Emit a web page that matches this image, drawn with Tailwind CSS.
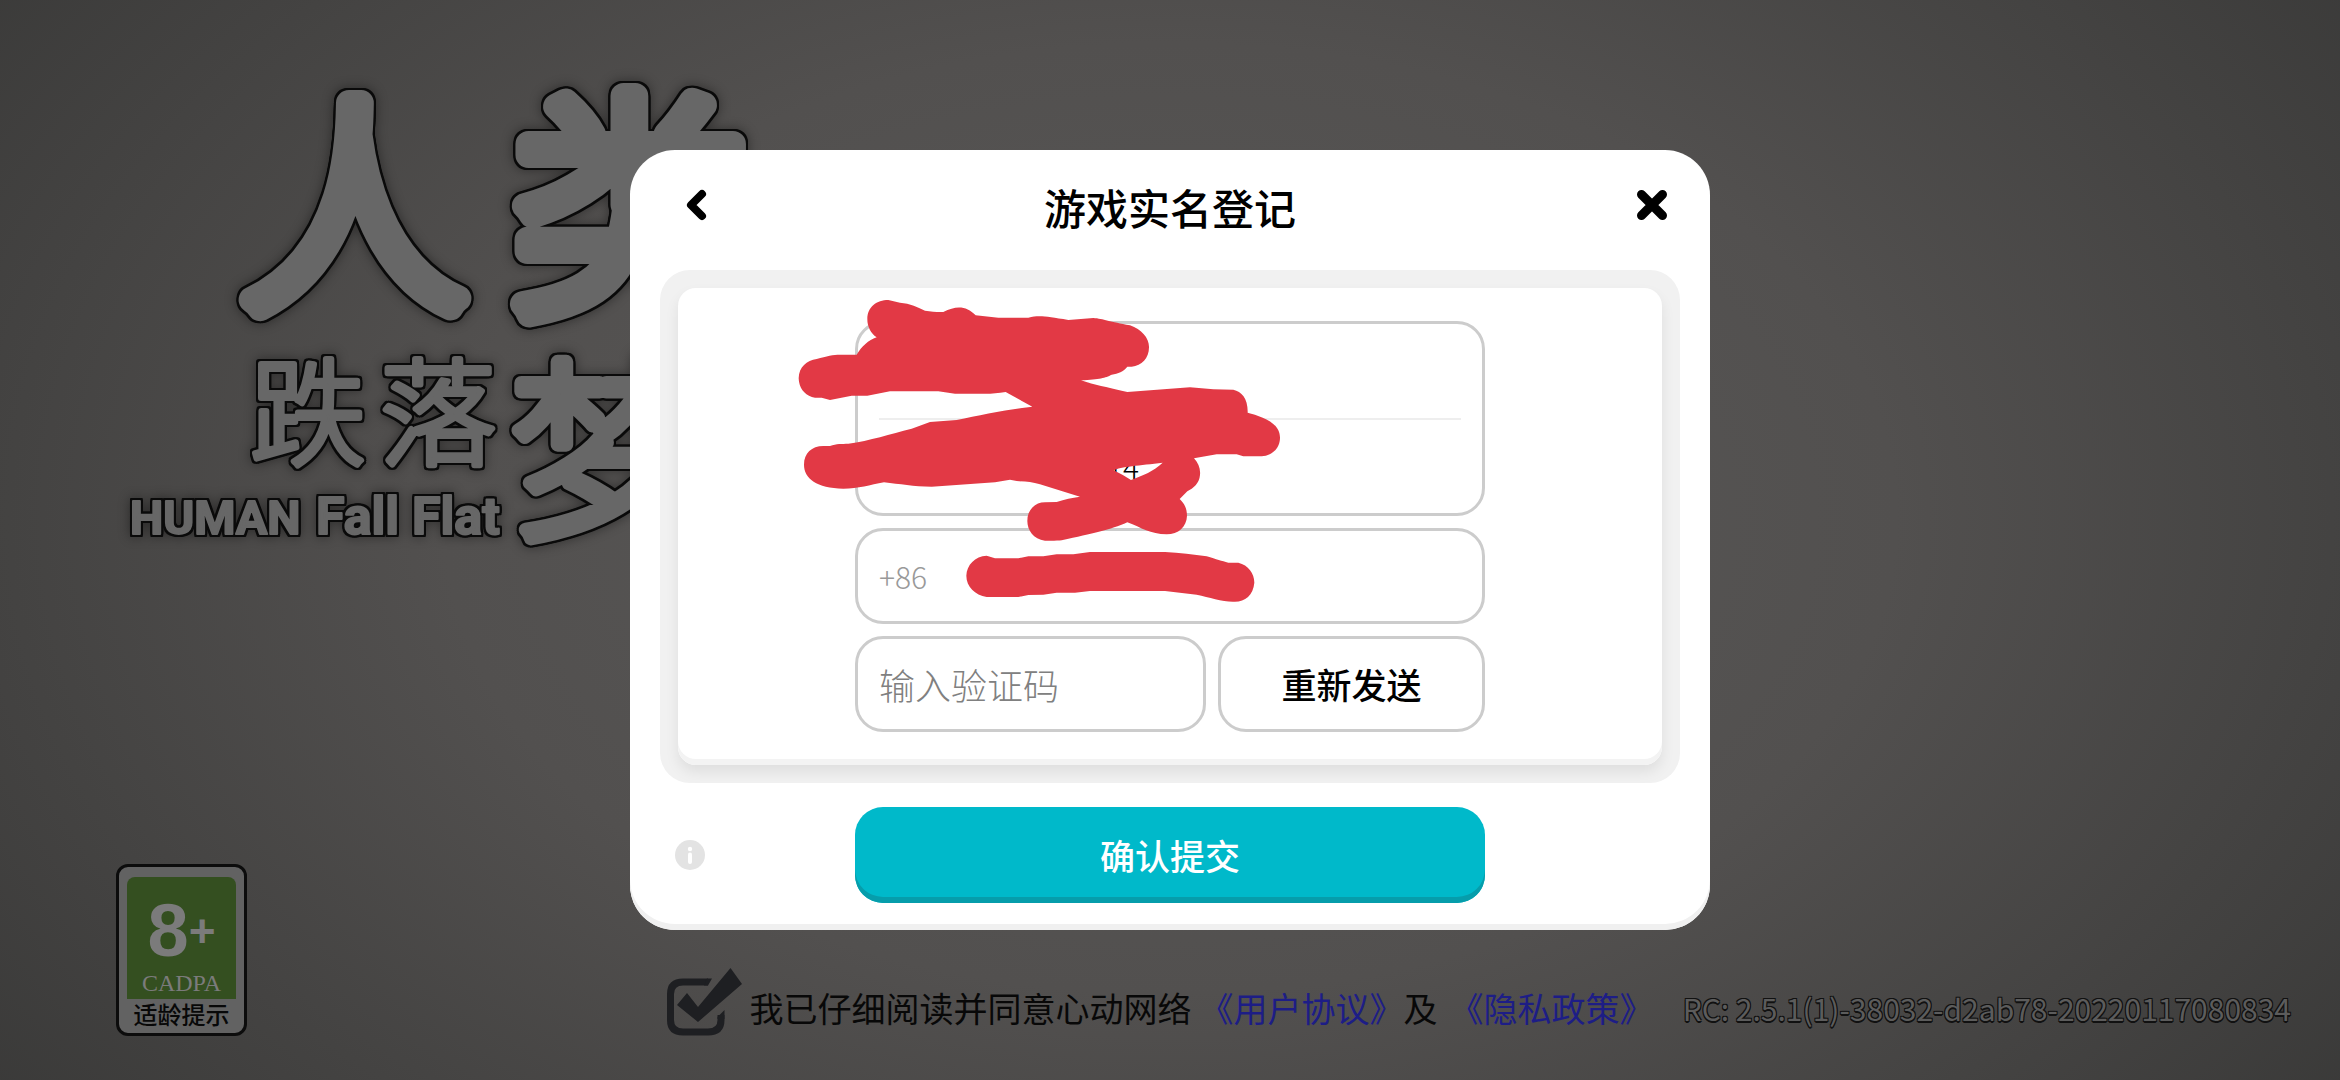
<!DOCTYPE html>
<html lang="zh-CN">
  <head>
    <meta charset="UTF-8" />
    <meta name="viewport" content="width=device-width, initial-scale=1.0" />
    <script src="https://cdn.jsdelivr.net/npm/@tailwindcss/browser@4"></script>
    <title>人类跌落梦境</title>
  </head>

  <body class="font-['Noto_Sans_CJK_SC',sans-serif]">
    <!-- login screen behind the dialog -->
    <div
      class="flex min-h-screen flex-col justify-between overflow-hidden bg-[radial-gradient(ellipse_62%_88%_at_50%_48%,#5a5958_0%,#52504f_50%,#444342_80%,#343433_115%)]"
    >
      <header class="pt-10 pl-[110px]">
        <svg
          class="h-[520px] w-[680px] fill-[#676767] stroke-[#676767] font-light [filter:drop-shadow(2px_0_0_#0a0a0a)_drop-shadow(-2px_0_0_#0a0a0a)_drop-shadow(0_2px_0_#0a0a0a)_drop-shadow(0_-2px_0_#0a0a0a)_drop-shadow(0_0_6px_#00000066)]"
          viewBox="110 40 680 520"
          stroke-linejoin="round"
          stroke-linecap="round"
          role="img"
          aria-label="人类跌落梦境 Human Fall Flat"
        >
          <g stroke-width="26">
            <text x="240" y="293" font-size="228">人</text>
            <text x="510" y="296" font-size="240">类</text>
          </g>
          <g stroke-width="6">
            <text x="250" y="456" font-size="116">跌</text>
            <text x="380" y="456" font-size="116">落</text>
          </g>
          <text x="510" y="522" font-size="192" stroke-width="14">梦</text>
          <g class="font-['Roboto',sans-serif] font-bold" stroke-width="2">
            <text x="130" y="534" font-size="47">HUMAN</text>
            <text x="316" y="534" font-size="52">Fall</text>
            <text x="412" y="534" font-size="52">Flat</text>
          </g>
        </svg>
      </header>

      <footer class="grid grid-cols-[1fr_auto_1fr] items-end pr-[49px] pb-11 pl-[29px]">
        <!-- age rating -->
        <div
          class="ml-[87px] flex w-[131px] flex-col items-center rounded-xl border-3 border-[#0c0c0c] bg-[#626262] px-2 pt-2.5 pb-1"
        >
          <div class="flex h-[122px] w-full flex-col items-center rounded-t-lg bg-[#344f20] pt-6 text-[#7b7b7b]">
            <div class="flex items-center font-['Liberation_Sans',sans-serif] font-bold">
              <span class="text-[74px] leading-[60px]">8</span>
              <span class="text-[46px] leading-[60px]">+</span>
            </div>
            <span class="mt-2 font-['Liberation_Serif',serif] text-[24px] leading-7">CADPA</span>
          </div>
          <span class="text-2xl leading-[30px] font-medium text-[#080808]">适龄提示</span>
        </div>

        <!-- agreement -->
        <div class="flex items-end text-[34px] leading-[56px] text-[#080808]">
          <input id="agree" type="checkbox" checked class="sr-only" />
          <label for="agree" class="flex items-end">
            <svg class="mr-2 h-[68px] w-[75px] text-[#1e1f22]" viewBox="0 0 75 68" aria-hidden="true">
              <path
                d="M41 14H16Q3.500 14 3.500 26V52Q3.500 64 16 64H41Q54 64 54 52V47"
                fill="none"
                stroke="currentColor"
                stroke-width="7"
              />
              <path d="M37 17.500h4l4-7h-5zM50.500 51V49L57.500 42V51z" fill="currentColor" />
              <path d="M10 37L20 25L31 39L63.500 0L75 16L31 54Z" fill="currentColor" />
            </svg>
            <span>我已仔细阅读并同意心动网络</span>
          </label>
          <a href="#" class="ml-2 text-[#1d1d86]">《用户协议》</a>
          <span>及</span>
          <a href="#" class="ml-3 text-[#1d1d86]">《隐私政策》</a>
        </div>

        <p
          class="justify-self-end text-[30px] leading-[56px] whitespace-nowrap text-[#5c5c5c] [text-shadow:1px_1px_0_#111,-1px_-1px_0_#111,1px_-1px_0_#111,-1px_1px_0_#111,0_2px_0_#111]"
        >
          RC: 2.5.1(1)-38032-d2ab78-20220117080834
        </p>
      </footer>
    </div>

    <!-- real-name dialog -->
    <div class="fixed inset-0 flex items-center justify-center">
      <section
        class="relative w-[1080px] rounded-[45px] bg-white px-[30px] pb-[27px] shadow-[inset_0_-6px_0_#f0f0f0]"
        role="dialog"
        aria-labelledby="dialog-title"
      >
        <header class="mb-1.5 flex h-[114px] items-center justify-between px-3">
          <button type="button" aria-label="返回" class="flex w-12 justify-center">
            <svg class="-mt-1 h-8 w-6" viewBox="0 0 24 32" fill="none" stroke="#000" stroke-width="8" stroke-linecap="round" stroke-linejoin="round">
              <path d="M18 5L7 16L18 27" />
            </svg>
          </button>
          <h1 id="dialog-title" class="text-[42px] leading-[60px] font-medium">游戏实名登记</h1>
          <button type="button" aria-label="关闭" class="flex w-12 justify-end">
            <svg class="-mt-1 h-8 w-8" viewBox="0 0 32 32" fill="none" stroke="#000" stroke-width="9" stroke-linecap="round">
              <path d="M5.500 5.500L26.500 26.500M26.500 5.500L5.500 26.500" />
            </svg>
          </button>
        </header>

        <form>
          <div class="rounded-[30px] bg-[#f1f1f1] p-[18px]">
            <div
              class="flex justify-center rounded-[18px] bg-white pt-[33px] pb-[33px] shadow-[inset_0_-6px_0_#f3f3f3,0_7px_14px_#00000014]"
            >
              <div class="flex w-[630px] flex-col gap-3 text-4xl">
                <div class="flex h-[195px] flex-col rounded-[28px] border-3 border-[#cccccc] px-[21px]">
                  <input type="text" aria-label="姓名" class="min-h-0 flex-1 outline-none" />
                  <input
                    type="text"
                    aria-label="身份证号"
                    value="14"
                    class="min-h-0 flex-1 border-t-2 border-[#eeeeee] pl-[228px] text-3xl font-light outline-none"
                  />
                </div>

                <label class="flex h-24 items-center gap-6 rounded-[28px] border-3 border-[#cccccc] px-[21px]">
                  <span class="text-3xl font-light text-[#999999]">+86</span>
                  <input type="tel" aria-label="手机号" class="min-w-0 flex-1 outline-none" />
                </label>

                <div class="flex gap-3">
                  <input
                    type="text"
                    aria-label="验证码"
                    placeholder="输入验证码"
                    class="h-24 min-w-0 flex-1 rounded-[28px] border-3 border-[#cccccc] px-[21px] font-light outline-none placeholder:text-[#808080]"
                  />
                  <button type="button" class="h-24 w-[267px] rounded-[28px] border-3 border-[#cccccc] text-[35px] font-medium">
                    重新发送
                  </button>
                </div>
              </div>
            </div>
          </div>

          <div class="mt-6 grid grid-cols-[1fr_630px_1fr] items-center">
            <button type="button" aria-label="说明" class="ml-[15px] w-[30px]">
              <svg class="h-[30px] w-[30px]" viewBox="0 0 30 30">
                <circle cx="15" cy="15" r="15" fill="#e3e3e3" />
                <circle cx="15" cy="9" r="2.200" fill="#fff" />
                <path d="M15 14.500V22" stroke="#fff" stroke-width="4" stroke-linecap="round" />
              </svg>
            </button>
            <button
              type="submit"
              class="h-24 rounded-[28px] bg-[#00b9ca] text-[35px] font-medium text-white shadow-[inset_0_-6px_0_#069dab]"
            >
              确认提交
            </button>
          </div>
        </form>

        <!-- red marker over the private fields -->
        <svg
          class="pointer-events-none absolute top-[140px] left-[150px] h-[320px] w-[520px] fill-[#e23945]"
          viewBox="0 0 1560 960"
          aria-hidden="true"
        >
          <path
            fill-rule="evenodd"
            d="M262 88C262 50 290 30 325 30L360 38C390 40 415 52 435 62C455 65 475 67 490 66C530 45 560 48 587 76L655 83L745 83C780 75 800 80 865 90L940 84C970 86 990 96 1050 106C1085 118 1108 145 1107 172C1107 205 1085 228 1055 230L1042 230C1030 245 1015 250 995 254C975 264 960 268 903 271C950 287 990 293 1042 306L1230 292L1300 298L1360 299C1385 305 1404 325 1403 368C1440 378 1500 395 1500 443C1500 475 1475 498 1445 499L1390 499L1370 493L1310 493L1242 505C1255 520 1262 535 1260 555C1258 580 1240 595 1222 604L1199 627C1213 640 1221 655 1221 677C1220 710 1195 733 1160 733C1110 733 1085 713 1042 697C990 720 940 730 845 751C835 752 815 753 795 752C760 748 742 720 742 693C742 660 765 637 795 637L830 636C855 627 875 624 900 620L780 583C755 575 735 575 710 573L690 569L645 577L455 590C400 590 360 582 312 577C270 585 235 596 190 596C110 594 72 565 72 524C72 490 95 468 130 468L150 468C170 460 185 462 205 461C270 452 330 432 395 416L450 396L530 390C600 375 680 358 757 350L677 306C650 310 630 312 600 311L525 311L475 304L330 304L262 317L215 317L150 330L125 323L105 323C75 318 57 295 56 265C57 230 80 212 110 207C140 198 160 194 180 194L230 194C245 170 265 150 290 142C272 130 262 110 262 88ZM1001 541C1020 530 1080 526 1148 518C1120 545 1090 555 1053 570Q1030 555 1001 541Z"
          />
          <path
            d="M559 857C560 825 585 798 620 797L645 805L715 805L745 799L790 799L830 793L880 793L930 786L1155 786C1200 789 1240 793 1280 799C1310 808 1325 813 1345 818L1375 818C1405 825 1423 850 1423 878C1420 915 1395 935 1365 935C1330 937 1290 922 1250 914L1155 903L930 903L885 908L830 908L790 914L745 915L715 921L620 921C585 915 559 890 559 857Z"
          />
        </svg>
      </section>
    </div>
  </body>
</html>
